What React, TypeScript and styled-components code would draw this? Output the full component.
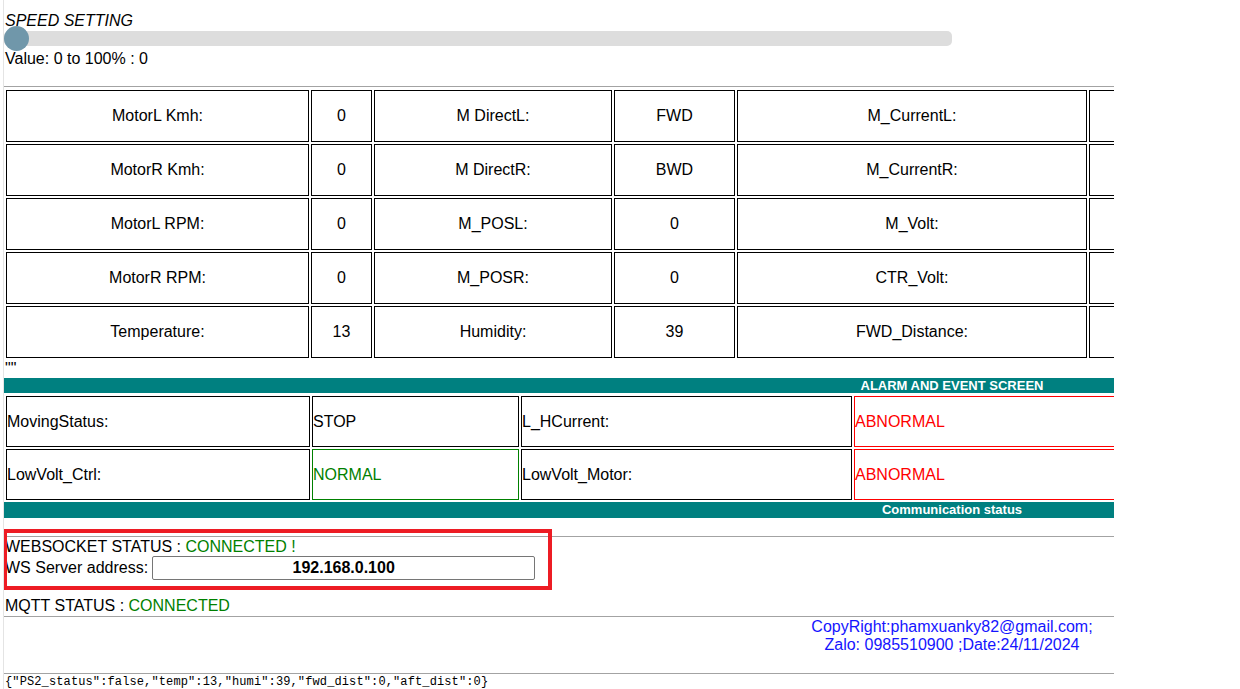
import React from "react";
import styled, { createGlobalStyle } from "styled-components";

const Global = createGlobalStyle`
  html, body { margin: 0; padding: 0; background: #fff; }
  body {
    font-family: "Liberation Sans", Arial, sans-serif;
    font-size: 16px;
    color: #000;
  }
`;

const Frame = styled.div`
  margin-left: 3px;
  width: 1110px;
  height: 689px;
  border-left: 1px solid #e4e4e4;
  overflow: hidden;
`;

const Page = styled.div`
  width: 1896px;
`;

const Title = styled.div`
  margin: 12px 0 0 1px;
  font-style: italic;
  line-height: 18px;
`;

const Slider = styled.div`
  position: relative;
  margin-top: 1px;
  width: 50%;
  height: 15px;
  border-radius: 5px;
  background: #dddddd;
`;

const Thumb = styled.div`
  position: absolute;
  left: 0;
  top: -5px;
  width: 25px;
  height: 25px;
  border-radius: 50%;
  background: #7097aa;
`;

const ValueText = styled.div`
  margin: 4px 0 0 1px;
  line-height: 18px;
`;

const Rule = styled.hr<{ $gap: number }>`
  margin: ${(p) => p.$gap}px 0 0 0;
  border: 0;
  border-top: 1px solid #a3a3a3;
  height: 0;
`;

const Grid = styled.div<{ $cols: string; $row: number; $top: number }>`
  display: grid;
  grid-template-columns: ${(p) => p.$cols};
  grid-auto-rows: ${(p) => p.$row}px;
  gap: 2px;
  padding: 2px;
  margin-top: ${(p) => p.$top}px;
`;

const Cell = styled.div<{ $center?: boolean; $border?: string; $color?: string }>`
  display: flex;
  align-items: center;
  justify-content: ${(p) => (p.$center ? "center" : "flex-start")};
  border: 1px solid ${(p) => p.$border || "#000"};
  color: ${(p) => p.$color || "#000"};
  white-space: nowrap;
  overflow: hidden;
`;

const Quote = styled.div`
  margin-left: 1px;
  line-height: 18px;
`;

const Banner = styled.div<{ $top: number; $h: number }>`
  margin-top: ${(p) => p.$top}px;
  height: ${(p) => p.$h}px;
  line-height: ${(p) => p.$h}px;
  background: #008080;
  color: #fff;
  font-weight: bold;
  font-size: 13px;
  text-align: center;
`;

const StatusSection = styled.div`
  position: relative;
  margin-top: 18px;
  &::after {
    content: "";
    position: absolute;
    left: -1px;
    top: -7px;
    width: 549px;
    height: 61px;
    box-sizing: border-box;
    border: 4px solid #ed1c24;
    pointer-events: none;
  }
`;

const StatusLine = styled.div<{ $top?: number }>`
  margin-top: ${(p) => p.$top || 0}px;
  margin-left: 1px;
  line-height: 18px;
`;

const Ok = styled.span`
  color: #008000;
`;

const AddressRow = styled.div`
  display: flex;
  align-items: center;
  gap: 4px;
  margin-left: 1px;
  height: 24px;
`;

const AddressInput = styled.input`
  box-sizing: border-box;
  width: 383px;
  height: 24px;
  border: 1px solid #767676;
  border-radius: 2px;
  padding: 0;
  font-family: "Liberation Sans", Arial, sans-serif;
  font-size: 16px;
  font-weight: bold;
  text-align: center;
  color: #000;
  background: #fff;
`;

const Footer = styled.div`
  margin-top: 1px;
  text-align: center;
  color: #1414ff;
  line-height: 18px;
`;

const Json = styled.div`
  margin-left: 1px;
  font-family: "Liberation Mono", "DejaVu Sans Mono", monospace;
  font-size: 12px;
  letter-spacing: 0.12px;
  line-height: 16px;
  white-space: pre;
`;

const topRows = [
  ["MotorL Kmh:", "0", "M DirectL:", "FWD", "M_CurrentL:", ""],
  ["MotorR Kmh:", "0", "M DirectR:", "BWD", "M_CurrentR:", ""],
  ["MotorL RPM:", "0", "M_POSL:", "0", "M_Volt:", ""],
  ["MotorR RPM:", "0", "M_POSR:", "0", "CTR_Volt:", ""],
  ["Temperature:", "13", "Humidity:", "39", "FWD_Distance:", ""],
];

type Alarm = { text: string; border?: string; color?: string };
const alarmRows: Alarm[][] = [
  [
    { text: "MovingStatus:" },
    { text: "STOP" },
    { text: "L_HCurrent:" },
    { text: "ABNORMAL", border: "#ff0000", color: "#ff0000" },
  ],
  [
    { text: "LowVolt_Ctrl:" },
    { text: "NORMAL", border: "#008000", color: "#008000" },
    { text: "LowVolt_Motor:" },
    { text: "ABNORMAL", border: "#ff0000", color: "#ff0000" },
  ],
];

export default function App() {
  return (
    <>
      <Global />
      <Frame>
        <Page>
          <Title>SPEED SETTING</Title>
          <Slider>
            <Thumb />
          </Slider>
          <ValueText>Value: 0 to 100% : 0</ValueText>
          <Rule $gap={18} />
          <Grid $cols="303px 61px 238px 121px 350px 1fr" $row={52} $top={1}>
            {topRows.flatMap((row, r) =>
              row.map((t, c) => (
                <Cell key={`${r}-${c}`} $center>
                  {t}
                </Cell>
              ))
            )}
          </Grid>
          <Quote>""</Quote>
          <Banner $top={0} $h={15}>ALARM AND EVENT SCREEN</Banner>
          <Grid $cols="304px 207px 331px 1fr" $row={51} $top={1}>
            {alarmRows.flatMap((row, r) =>
              row.map((a, c) => (
                <Cell key={`${r}-${c}`} $border={a.border} $color={a.color}>
                  {a.text}
                </Cell>
              ))
            )}
          </Grid>
          <Banner $top={0} $h={16}>Communication status</Banner>
          <StatusSection>
            <Rule $gap={0} />
            <StatusLine $top={1}>
              WEBSOCKET STATUS : <Ok>CONNECTED !</Ok>
            </StatusLine>
            <AddressRow>
              <span>WS Server address:</span>
              <AddressInput readOnly value="192.168.0.100" />
            </AddressRow>
          </StatusSection>
          <StatusLine $top={17}>
            MQTT STATUS : <Ok>CONNECTED</Ok>
          </StatusLine>
          <Rule $gap={1} />
          <Footer>
            CopyRight:phamxuanky82@gmail.com;
            <br />
            Zalo: 0985510900 ;Date:24/11/2024
          </Footer>
          <Rule $gap={19} />
          <Json>{'{"PS2_status":false,"temp":13,"humi":39,"fwd_dist":0,"aft_dist":0}'}</Json>
        </Page>
      </Frame>
    </>
  );
}
